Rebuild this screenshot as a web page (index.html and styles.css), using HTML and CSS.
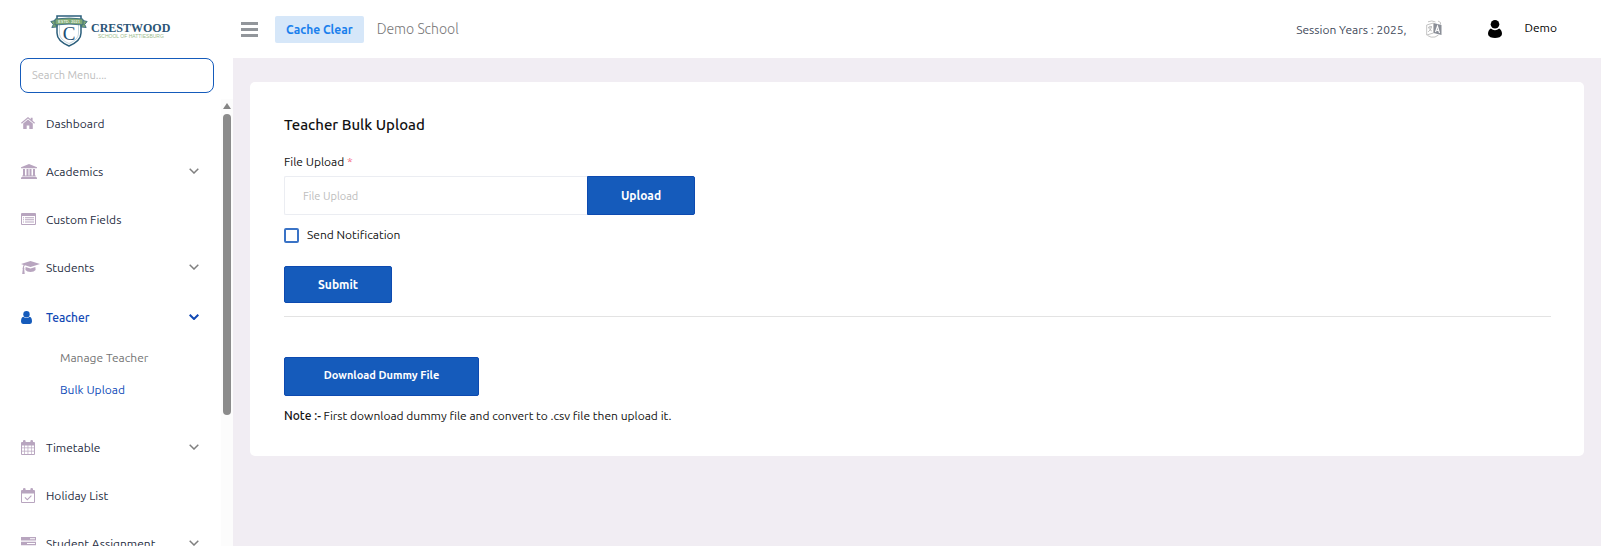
FILE: index.html
```html
<!DOCTYPE html>
<html lang="en">
<head>
  <meta charset="UTF-8" />
  <meta name="viewport" content="width=device-width, initial-scale=1.0" />
  <title>Teacher Bulk Upload</title>
  <link rel="stylesheet" href="styles.css">
</head>
<body>
  <aside class="sidebar">
    <a class="brand" href="#">
      <svg class="brand-shield" viewBox="0 0 38 32" width="38" height="32">
        <path d="M7 1h24v17c0 6-5 10-12 13C12 28 7 24 7 18z" fill="#fff" stroke="#2b5f7c" stroke-width="1.5"/>
        <path d="M9.500 9h19v9c0 5-4 8-9.500 10.500C13.500 26 9.500 23 9.500 18z" fill="none" stroke="#9cb9c6" stroke-width=".6"/>
        <path d="M.8 6.500l6-1.500v7l-5 .5 1.500-3zM37.200 6.500l-6-1.500v7l5 .5-1.500-3z" fill="#7ea774" stroke="#2b5f7c" stroke-width=".8"/>
        <path d="M5 4q14-2 28 0v6q-14-2-28 0z" fill="#7fa874" stroke="#2b5f7c" stroke-width=".8"/>
        <text x="19" y="8" class="shield-date">ESTD. 2021</text>
        <text x="19" y="25" class="shield-letter">C</text>
      </svg>
      <span class="brand-text">
        <span class="brand-name">CRESTWOOD</span>
        <span class="brand-sub">SCHOOL OF HATTIESBURG</span>
      </span>
    </a>
    <input class="menu-search" type="text" placeholder="Search Menu...." aria-label="Search Menu" />

    <div class="menu-area">
      <nav class="menu">
        <a class="menu-item" href="#">
          <svg class="icon" viewBox="0 0 14 12" width="14" height="12"><path d="M7 2.600l4.800 4V11.500q0 .5-.5.5H8.300V8.500H5.700V12H2.700q-.5 0-.5-.5V6.600zM7 0l2.700 2.200V.7h1.900v3.100L14 5.800l-.8.9L7 1.500.8 6.700 0 5.800z"/></svg>
          <span>Dashboard</span>
        </a>
        <a class="menu-item" href="#">
          <svg class="icon" viewBox="0 0 16 15" width="16" height="15"><path d="M8 0l8 3.200v1H0v-1zM2 5h2v6.500h1.500V5h2v6.500h1V5h2v6.500H12V5h2v6.500h.8v1H1.200v-1H2zM.6 13h14.800v.6H16V15H0v-1.400h.6z"/></svg>
          <span>Academics</span>
          <svg class="chevron" viewBox="0 0 10 6" width="10" height="6"><path d="M.7.700L5 5 9.300.700"/></svg>
        </a>
        <a class="menu-item" href="#">
          <svg class="icon" viewBox="0 0 15 12" width="15" height="12"><path fill-rule="evenodd" d="M1 0h13q1 0 1 1v10q0 1-1 1H1q-1 0-1-1V1q0-1 1-1zM1 3v7.500q0 .5.5.5h12q.5 0 .5-.5V3zM2 4.200h1v1H2zm2 0h9v1H4zM2 6.300h1v1H2zm2 0h9v1H4zM2 8.400h1v1H2zm2 0h9v1H4z"/></svg>
          <span>Custom Fields</span>
        </a>
        <a class="menu-item" href="#">
          <svg class="icon" viewBox="0 0 19 13" width="19" height="13"><path d="M9.500 0L19 3 9.500 6 4 4.300q-1 .6-1 2.200.8.500.2 1.500L3.700 13H1.200L1.800 8q-.7-1 .1-1.500 0-1.600.8-2.600L0 3zM4.600 5.900l4.900 1.500 4.900-1.500.2 3q-1.500 2-5.100 2-3.600 0-5.100-2z"/></svg>
          <span>Students</span>
          <svg class="chevron" viewBox="0 0 10 6" width="10" height="6"><path d="M.7.700L5 5 9.300.700"/></svg>
        </a>
        <div class="menu-group">
          <a class="menu-item active" href="#">
            <svg class="icon" viewBox="0 0 11 13" width="11" height="13"><circle cx="5.500" cy="3.200" r="3.200"/><path d="M2.300 5.800q3.200 2.600 6.400 0Q11 6.600 11 10.600 11 13 9 13H2q-2 0-2-2.400 0-4 2.300-4.800z"/></svg>
            <span>Teacher</span>
            <svg class="chevron" viewBox="0 0 10 6" width="10" height="6"><path d="M.7.700L5 5 9.300.700"/></svg>
          </a>
          <div class="submenu">
            <a href="#">Manage Teacher</a>
            <a class="current" href="#">Bulk Upload</a>
          </div>
        </div>
        <a class="menu-item" href="#">
          <svg class="icon" viewBox="0 0 14 15" width="14" height="15"><path fill-rule="evenodd" d="M1 2h1V1q0-1 1.300-1T4.600 1v1h4.800V1q0-1 1.300-1T12 1v1h1q1 0 1 1v11q0 1-1 1H1q-1 0-1-1V3q0-1 1-1zM1 5.500v2h2.300v-2zm3 0v2h2.600v-2zm3.300 0v2H10v-2zm3.300 0v2H13v-2zM1 8.300v2.400h2.300V8.300zm3 0v2.400h2.600V8.300zm3.300 0v2.400H10V8.300zm3.300 0v2.400H13V8.300zM1 11.500V14h2.300v-2.500zm3 0V14h2.600v-2.500zm3.300 0V14H10v-2.500zm3.300 0V14H13v-2.500z"/></svg>
          <span>Timetable</span>
          <svg class="chevron" viewBox="0 0 10 6" width="10" height="6"><path d="M.7.700L5 5 9.300.700"/></svg>
        </a>
        <a class="menu-item" href="#">
          <svg class="icon" viewBox="0 0 14 15" width="14" height="15"><path fill-rule="evenodd" d="M1 2h1V1q0-1 1.300-1T4.600 1v1h4.800V1q0-1 1.300-1T12 1v1h1q1 0 1 1v11q0 1-1 1H1q-1 0-1-1V3q0-1 1-1zM1 5.500V14h12V5.500zM3.500 9.700l.8-.8 2 2 3.700-3.700.8.800-4.500 4.500z"/></svg>
          <span>Holiday List</span>
        </a>
        <a class="menu-item" href="#">
          <svg class="icon" viewBox="0 0 15 13" width="15" height="13"><path fill-rule="evenodd" d="M0 0h15v3.500H0zM9 1.200v1h5v-1zM0 4.700h15v3.500H0zM6 6v1h8V6zM0 9.400h15V13H0zM11 10.700v1h3v-1z"/></svg>
          <span>Student Assignment</span>
          <svg class="chevron" viewBox="0 0 10 6" width="10" height="6"><path d="M.7.700L5 5 9.300.700"/></svg>
        </a>
      </nav>
      <div class="scroll-track">
        <div class="scroll-up"></div>
        <div class="scroll-thumb"></div>
      </div>
    </div>
  </aside>

  <div class="page">
    <header class="topbar">
      <button class="menu-toggle" type="button" aria-label="Toggle menu">
        <svg viewBox="0 0 17 15" width="17" height="15"><path d="M0 0h17v3H0zM0 6h17v3H0zM0 12h17v3H0z" fill="#92969b"/></svg>
      </button>
      <button class="cache-btn" type="button">Cache Clear</button>
      <span class="school-name">Demo School</span>
      <div class="topbar-right">
        <span class="session">Session Years : 2025,</span>
        <button class="lang-btn" type="button" aria-label="Language">
          <svg viewBox="0 0 16 18" width="16" height="18">
            <path d="M7.500 3L15.500 5v10L7.500 13z" fill="#8b8f98"/>
            <path d="M.7 5l6.800-2v10L.7 15zM2 1.800Q6 0 9.500 2M14.500 4.500V2.500L12 1M1.500 15.500Q5 18 9 17l3.500-2" fill="none" stroke="#bcbcbc" stroke-width=".9"/>
            <path d="M2 7.500l4-1M4 5.800v1.500M5.500 7q-.5 3-3.300 4.800M2.800 8q1 2 3 3" fill="none" stroke="#aaa" stroke-width=".8"/>
            <path d="M9.500 12l2-6 2 7M10.200 10l2.600.6" fill="none" stroke="#fff" stroke-width="1.100"/>
          </svg>
        </button>
        <a class="user-link" href="#">
          <svg viewBox="0 0 14 18" width="14" height="18"><circle cx="7" cy="4.300" r="4.300"/><path d="M2.800 8.600Q7 11.800 11.200 8.600 14 10.300 14 14q0 2-2.500 3.200Q7 18.700 2.500 17.200 0 16 0 14q0-3.700 2.800-5.400z"/></svg>
          <span>Demo</span>
        </a>
      </div>
    </header>

    <main class="content">
      <section class="card">
        <h1>Teacher Bulk Upload</h1>
        <form>
          <label class="field-label" for="file">File Upload <span class="required">*</span></label>
          <div class="file-row">
            <input type="text" id="file" placeholder="File Upload" />
            <button class="btn" type="button">Upload</button>
          </div>
          <label class="check">
            <input type="checkbox" />
            <span>Send Notification</span>
          </label>
          <button class="btn submit" type="submit">Submit</button>
        </form>
        <hr>
        <button class="btn download" type="button">Download Dummy File</button>
        <p class="note"><b>Note :-</b> First download dummy file and convert to .csv file then upload it.</p>
      </section>
    </main>
  </div>
</body>
</html>
```
FILE: styles.css
```css
* {
  box-sizing: border-box;
}
body {
  display: flex;
  height: 100vh;
  margin: 0;
  overflow: hidden;
  font-family: Ubuntu, "Noto Sans", sans-serif;
  font-size: 12px;
  color: #111;
  background: #f1edf3;
}
a {
  color: inherit;
  text-decoration: none;
}
button, input {
  font-family: inherit;
}
button {
  cursor: pointer;
}

/* sidebar */
.sidebar {
  display: flex;
  flex-direction: column;
  flex: 0 0 233px;
  background: #fff;
}
.brand {
  display: flex;
  align-items: center;
  gap: 3px;
  height: 58px;
  padding: 4px 0 0 50px;
}
.brand-text {
  display: flex;
  flex-direction: column;
  font-family: "Liberation Serif", serif;
  line-height: 10px;
}
.brand-name {
  font-size: 12px;
  font-weight: bold;
  color: #2b5576;
}
.brand-sub {
  padding-left: 7px;
  font-family: "Liberation Sans", sans-serif;
  font-size: 5px;
  line-height: 6px;
  color: #9dbb8e;
}
.shield-date {
  font: bold 4px "Liberation Sans", sans-serif;
  text-anchor: middle;
  fill: #e8f0df;
}
.shield-letter {
  font: 19px "Liberation Serif", serif;
  text-anchor: middle;
  fill: #1f4f73;
}
.menu-search {
  flex: none;
  height: 35px;
  margin: 0 19px 6px 20px;
  padding: 0 11px 1px;
  border: 1px solid #155bbb;
  border-radius: 8px;
  font-size: 11px;
}
input::placeholder {
  color: #bdbdbd;
}
.menu-area {
  display: flex;
  flex: 1;
  min-height: 0;
}
.menu {
  flex: 1;
  overflow: hidden;
}
.menu-item {
  display: grid;
  grid-template-columns: 25px 1fr auto;
  align-items: center;
  height: 48px;
  padding: 0 22px 0 21px;
  color: #1f2d42;
}
.menu-item span {
  white-space: nowrap;
}
.icon {
  fill: #b8a5bf;
}
.chevron {
  fill: none;
  stroke: #808080;
  stroke-width: 1.5;
}
.menu-group {
  padding: 2px 0 17px;
}
.menu-item.active {
  font-weight: 500;
  color: #1048b4;
}
.active .icon {
  fill: #155bbb;
}
.active .chevron {
  stroke: #1048b4;
  stroke-width: 2;
}
.submenu {
  padding: 1px 0 0 60px;
  line-height: 32px;
  color: #757575;
}
.submenu a {
  display: block;
}
.submenu .current {
  color: #0d4ab8;
}
.scroll-track {
  display: flex;
  flex-direction: column;
  align-items: center;
  gap: 5px;
  width: 12px;
  padding-top: 4px;
  background: #fcfcfc;
}
.scroll-up {
  border: 4px solid transparent;
  border-top: 0;
  border-bottom: 6px solid #858585;
}
.scroll-thumb {
  width: 8px;
  height: 68%;
  border-radius: 4px;
  background: #8b8b8b;
}

/* top bar */
.page {
  flex: 1;
  min-width: 0;
}
.topbar {
  display: flex;
  align-items: center;
  height: 58px;
  padding: 0 44px 0 8px;
  background: #fff;
}
.menu-toggle, .lang-btn {
  display: flex;
  padding: 0;
  border: 0;
  background: none;
}
.cache-btn {
  height: 27px;
  margin: 0 13px 0 17px;
  padding: 0 11px;
  border: 0;
  border-radius: 2px;
  background: #d6e7f9;
  color: #1a80ed;
  font-size: 12px;
  font-weight: bold;
}
.school-name {
  font-size: 14px;
  font-weight: 300;
  color: #777;
}
.topbar-right {
  display: flex;
  align-items: center;
  margin-left: auto;
}
.session {
  color: #3f4a5a;
}
.lang-btn {
  margin: 0 46px 0 19px;
}
.user-link {
  display: flex;
  align-items: center;
  gap: 23px;
  color: #000;
}
.user-link span {
  padding-bottom: 3px;
}

/* content */
.content {
  padding: 24px 17px;
}
.card {
  padding: 33px 33px 32px 34px;
  border-radius: 5px;
  background: #fff;
}
h1 {
  margin: 0 0 18px;
  font-size: 15px;
  font-weight: 500;
  line-height: 20px;
}
.field-label {
  display: block;
  margin-bottom: 6px;
  line-height: 17px;
}
.required {
  color: #f36b7f;
}
.file-row {
  display: flex;
  max-width: 411px;
  height: 39px;
}
.file-row input {
  flex: 1;
  min-width: 0;
  padding: 0 18px;
  border: 1px solid #ebedf2;
  border-right: 0;
  border-radius: 2px 0 0 2px;
  font-size: 11px;
}
.btn {
  width: 108px;
  border: 1px solid #0d4ab0;
  border-radius: 2px;
  background: #155bbb;
  color: #fff;
  font-size: 12px;
  font-weight: bold;
}
.file-row .btn {
  border-radius: 0 2px 2px 0;
}
.check {
  display: flex;
  align-items: center;
  gap: 8px;
  width: fit-content;
  margin: 11px 0 22px;
  line-height: 18px;
}
.check input {
  appearance: none;
  width: 15px;
  height: 15px;
  margin: 0;
  border: 2px solid #3a73c6;
  border-radius: 2px;
}
.check input:checked {
  background: #155bbb;
}
.submit {
  display: block;
  height: 37px;
}
hr {
  height: 1px;
  margin: 13px 0 40px;
  border: 0;
  background: #e3e3e3;
}
.download {
  display: block;
  width: 195px;
  height: 39px;
  padding-bottom: 4px;
  font-size: 11px;
}
.note {
  margin: 11px 0 0;
  line-height: 17px;
}
.note b {
  font-weight: 500;
}
```
